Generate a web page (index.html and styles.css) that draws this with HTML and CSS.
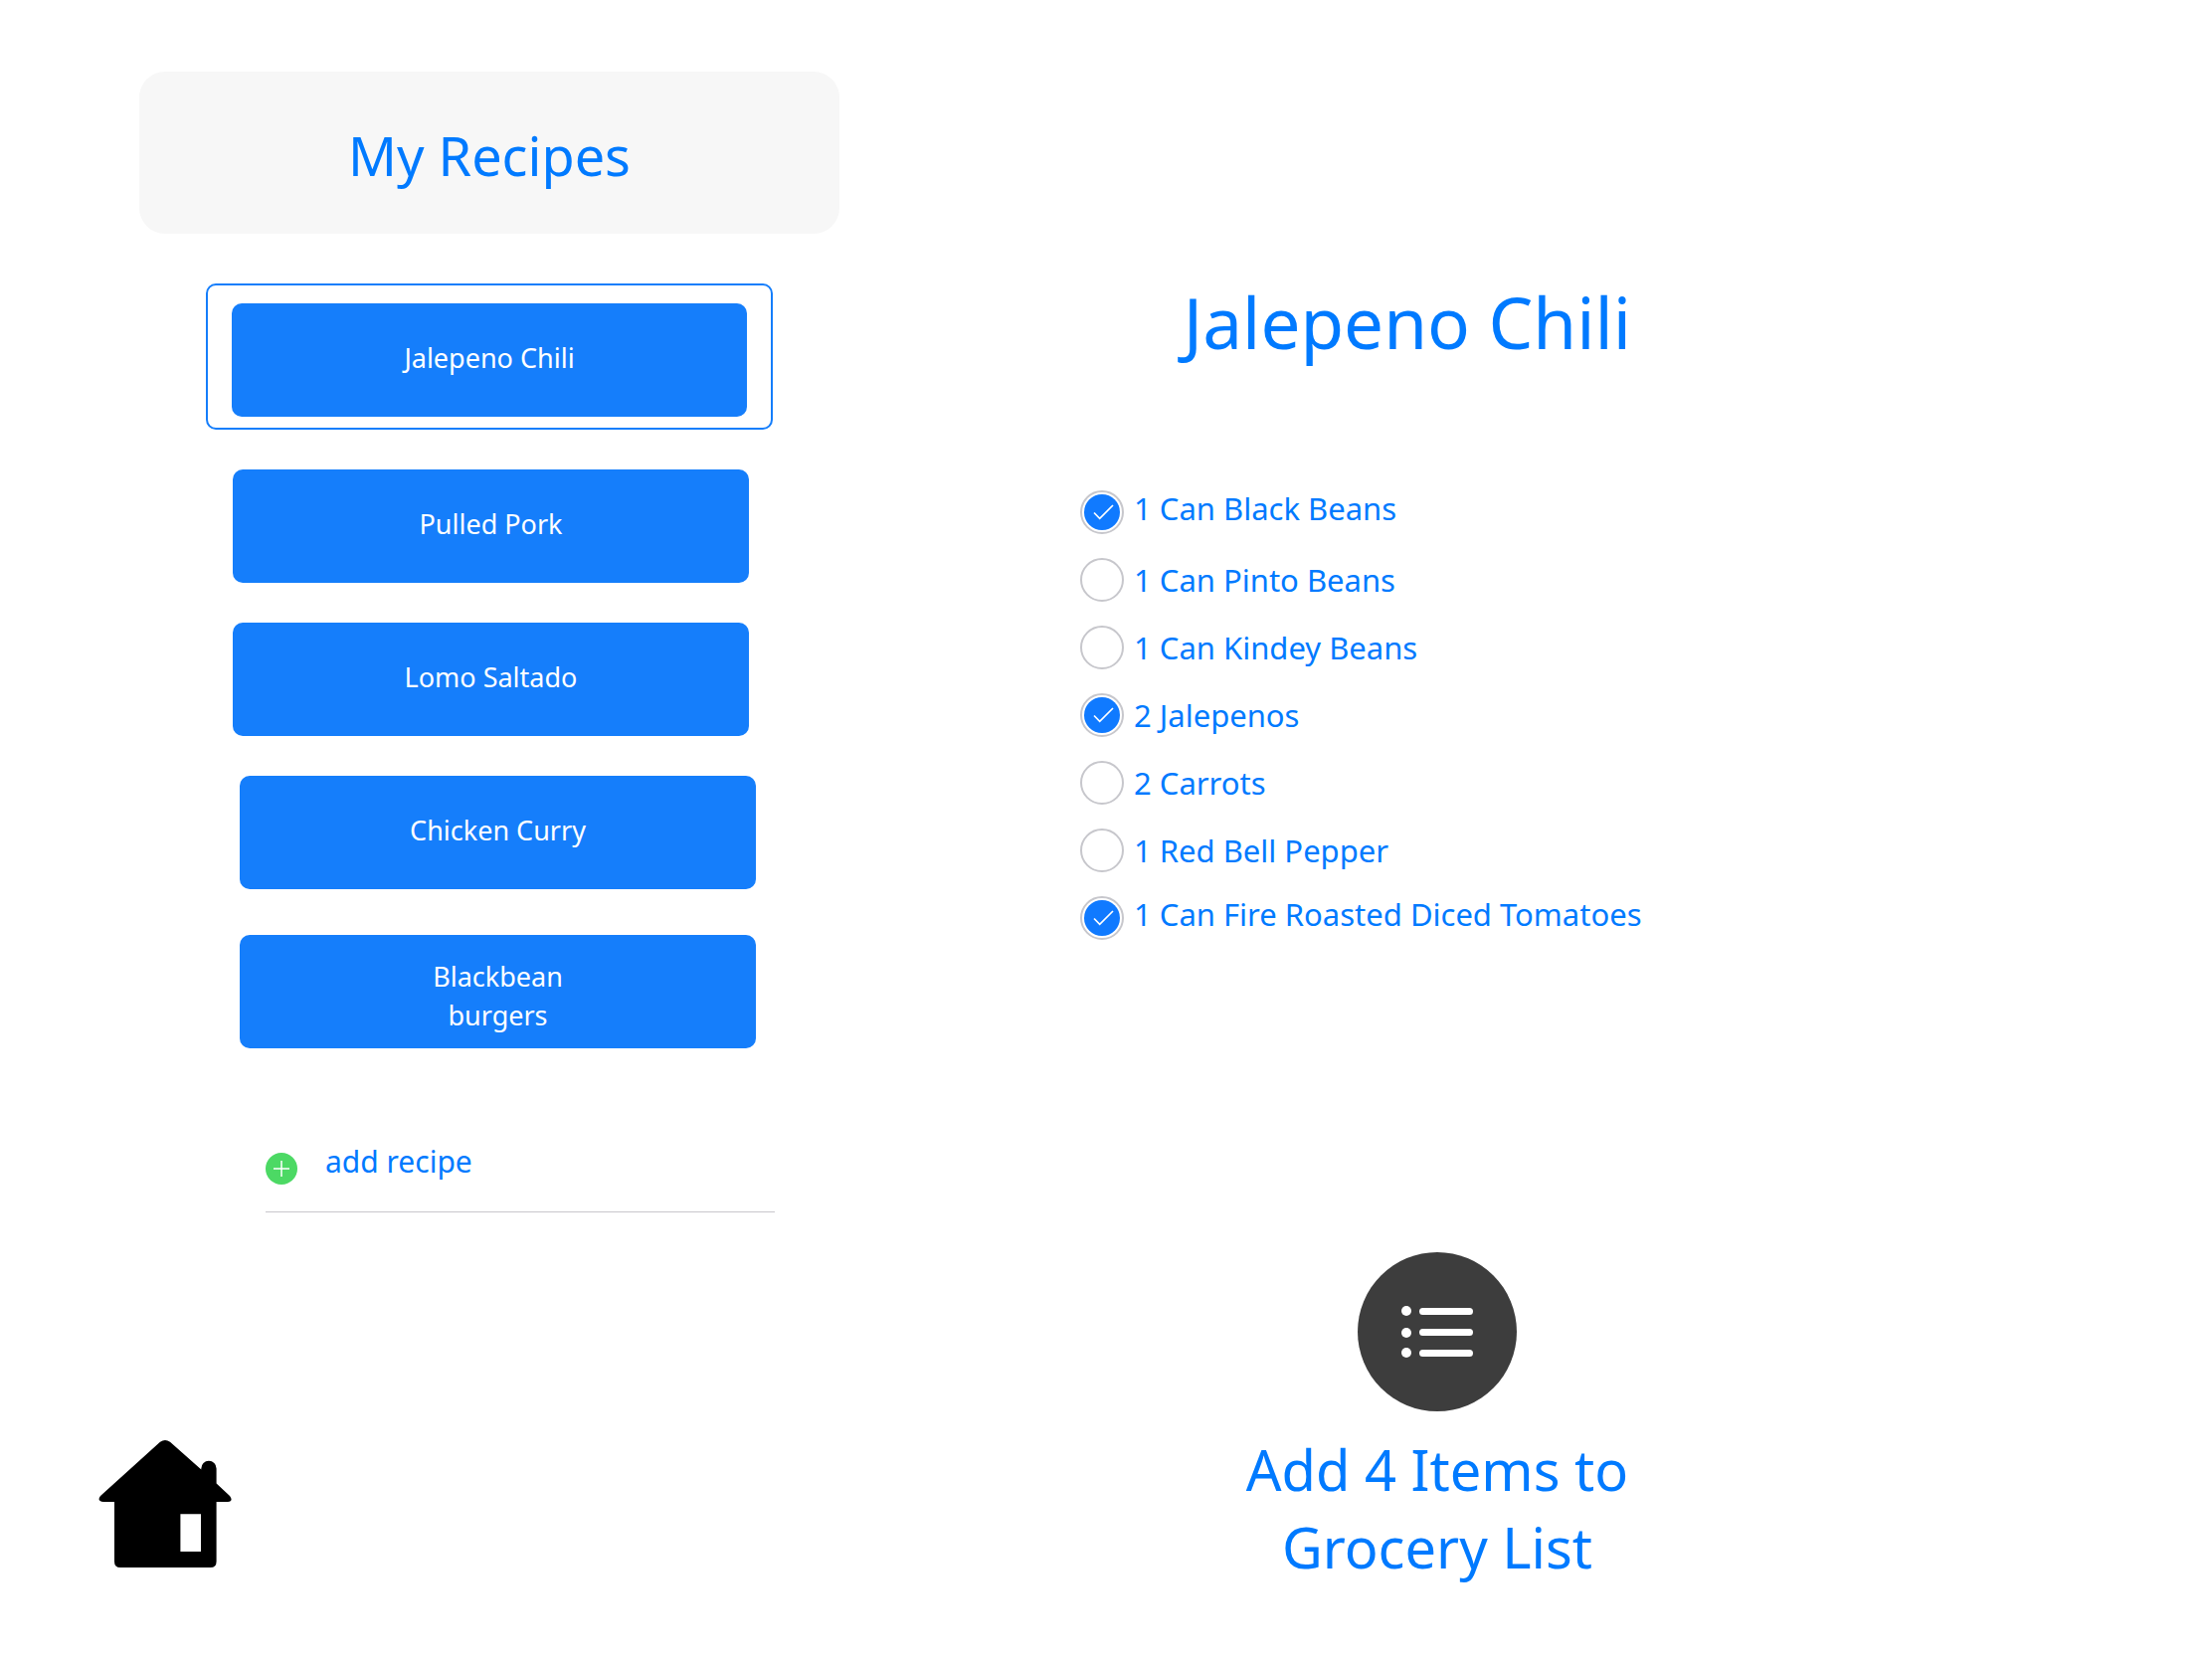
FILE: index.html
```html
<!DOCTYPE html>
<html lang="en">
<head>
  <meta charset="utf-8">
  <meta name="viewport" content="width=device-width, initial-scale=1">
  <title>My Recipes</title>
  <link rel="stylesheet" href="styles.css">
</head>
<body>
  <div class="page">
    <aside class="sidebar">
      <header class="sidebar-header">
        <h1 class="sidebar-title">My Recipes</h1>
      </header>

      <nav class="recipes" aria-label="Recipes">
        <ul class="recipe-group">
          <li class="recipe-selected"><button class="recipe" type="button" aria-current="true">Jalepeno Chili</button></li>
          <li class="recipe-item"><button class="recipe" type="button">Pulled Pork</button></li>
          <li class="recipe-item"><button class="recipe" type="button">Lomo Saltado</button></li>
        </ul>
        <ul class="recipe-group recipe-group-more">
          <li class="recipe-item"><button class="recipe" type="button">Chicken Curry</button></li>
          <li class="recipe-item"><button class="recipe recipe-two-line" type="button">Blackbean<br>burgers</button></li>
        </ul>
      </nav>

      <button class="add-recipe" type="button">
        <svg class="add-icon" viewBox="0 0 32 32" aria-hidden="true">
          <circle cx="16" cy="16" r="16" fill="#4cd964"/>
          <path d="M8 16H24M16 8V24" stroke="#fff" stroke-width="1.5"/>
        </svg>
        <span>add recipe</span>
      </button>

      <a class="home" href="#" aria-label="Home">
        <svg class="home-icon" viewBox="0 0 134 128" aria-hidden="true">
          <path fill-rule="evenodd" d="M62 1.800Q67-1.800 72 1.800L103.300 29.500V28.500A7.600 7.600 0 0 1 118.600 28.500V43.500L132 56Q136 61.500 130 62H118.600V122Q118.600 128 112.500 128H22Q16 128 16 122V62H5Q-2 61.500 2 56ZM82.400 74.300V112H103V74.300Z"/>
        </svg>
      </a>
    </aside>

    <main class="detail">
      <section class="ingredients">
        <h2 class="detail-title">Jalepeno Chili</h2>
        <ul class="ingredient-list">
          <li><label class="ingredient ingredient-raised"><input class="check" type="checkbox" checked><span>1 Can Black Beans</span></label></li>
          <li><label class="ingredient"><input class="check" type="checkbox"><span>1 Can Pinto Beans</span></label></li>
          <li><label class="ingredient"><input class="check" type="checkbox"><span>1 Can Kindey Beans</span></label></li>
          <li><label class="ingredient"><input class="check" type="checkbox" checked><span>2 Jalepenos</span></label></li>
          <li><label class="ingredient"><input class="check" type="checkbox"><span>2 Carrots</span></label></li>
          <li><label class="ingredient"><input class="check" type="checkbox"><span>1 Red Bell Pepper</span></label></li>
          <li><label class="ingredient ingredient-raised"><input class="check" type="checkbox" checked><span>1 Can Fire Roasted Diced Tomatoes</span></label></li>
        </ul>
      </section>

      <div class="actions">
        <button class="add-items" type="button">
          <svg class="list-icon" viewBox="0 0 160 160" aria-hidden="true">
            <circle cx="80" cy="80" r="80" fill="#3d3d3d"/>
            <g fill="#fff">
              <circle cx="49" cy="59" r="5"/>
              <circle cx="49" cy="81" r="5"/>
              <circle cx="49" cy="101" r="5"/>
            </g>
            <path d="M65.500 59.500H112.500M65.500 80.500H112.500M65.500 101.500H112.500" stroke="#fff" stroke-width="7" stroke-linecap="round"/>
          </svg>
          <span>Add 4 Items to<br>Grocery List</span>
        </button>
      </div>
    </main>
  </div>
</body>
</html>
```
FILE: styles.css
```css
* {
  box-sizing: border-box;
}

body {
  margin: 0;
  background: #fff;
  color: #007aff;
  font-family: "Noto Sans", "Open Sans", sans-serif;
}

button {
  margin: 0;
  padding: 0;
  border: 0;
  background: none;
  color: inherit;
  font: inherit;
  cursor: pointer;
}

h1,
h2,
ul {
  margin: 0;
  padding: 0;
  font-weight: 400;
  list-style: none;
}

.page {
  display: grid;
  grid-template-columns: minmax(0, 844fr) minmax(0, 1380fr);
  min-height: 100vh;
}

/* Recipe list */

.sidebar {
  display: flex;
  flex-direction: column;
  padding: 72px 0 92px 99px;
}

.sidebar-header {
  display: flex;
  align-items: center;
  justify-content: center;
  min-height: 163px;
  margin-left: 41px;
  padding-top: 4px;
  border-radius: 26px;
  background: #f7f7f7;
}

.sidebar-title {
  font-size: 54px;
  line-height: 78px;
}

.recipes {
  display: flex;
  flex-direction: column;
  gap: 40px;
  margin: 50px 67px 0 108px;
}

.recipe-group {
  display: flex;
  flex-direction: column;
  gap: 40px;
}

.recipe-group-more {
  gap: 46px;
  padding-left: 7px;
}

.recipe-item {
  padding: 0 24px 0 27px;
}

.recipe-group-more .recipe-item {
  padding-right: 17px;
}

.recipe-selected {
  padding: 18px 24px 11px;
  border: 2px solid #157efb;
  border-radius: 10px;
}

.recipe {
  display: flex;
  align-items: center;
  justify-content: center;
  width: 100%;
  min-height: 114px;
  padding-bottom: 6px;
  border-radius: 10px;
  background: #157efb;
  color: #fff;
  font-size: 27px;
  line-height: 39px;
}

.recipe-two-line {
  padding: 8px 0 0;
}

.add-recipe {
  display: flex;
  align-items: flex-start;
  gap: 28px;
  margin: 93px 65px 0 168px;
  padding-bottom: 27px;
  border-bottom: 1px solid #c8c7cc;
  font-size: 30px;
  line-height: 42px;
}

.add-icon {
  width: 32px;
  height: 32px;
  margin-top: 12px;
}

.home {
  align-self: flex-start;
  margin-top: auto;
  color: #000;
}

.home-icon {
  display: block;
  width: 134px;
  height: 128px;
  fill: currentColor;
}

/* Selected recipe */

.detail {
  display: flex;
  flex-direction: column;
  padding: 276px 0 74px 242px;
}

.ingredients {
  max-width: 658px;
}

.detail-title {
  font-size: 71px;
  line-height: 96px;
  text-align: center;
}

.ingredient-list {
  display: flex;
  flex-direction: column;
  gap: 24px;
  margin-top: 121px;
}

.ingredient {
  display: flex;
  align-items: center;
  gap: 10px;
  min-height: 44px;
  font-size: 31px;
  line-height: 44px;
}

.ingredient-raised span {
  line-height: 36px;
  padding-bottom: 8px;
}

.check {
  display: grid;
  flex: none;
  place-items: center;
  width: 44px;
  height: 44px;
  margin: 0;
  border: 2px solid #c7c7cc;
  border-radius: 50%;
  appearance: none;
  background: #fff;
}

.check:checked::before {
  content: "";
  width: 36px;
  height: 36px;
  border-radius: 50%;
  background: #107aff url("data:image/svg+xml,%3Csvg xmlns='http://www.w3.org/2000/svg' viewBox='0 0 36 36'%3E%3Cpath d='M10 18.500L15.700 24.300L29 11' fill='none' stroke='%23fff' stroke-width='1.700'/%3E%3C/svg%3E") center / 36px no-repeat;
}

.actions {
  display: flex;
  justify-content: center;
  max-width: 718px;
  margin-top: auto;
}

.add-items {
  display: flex;
  flex-direction: column;
  align-items: center;
  gap: 19px;
  font-size: 56px;
  line-height: 78px;
}

.list-icon {
  width: 160px;
  height: 160px;
}
```
